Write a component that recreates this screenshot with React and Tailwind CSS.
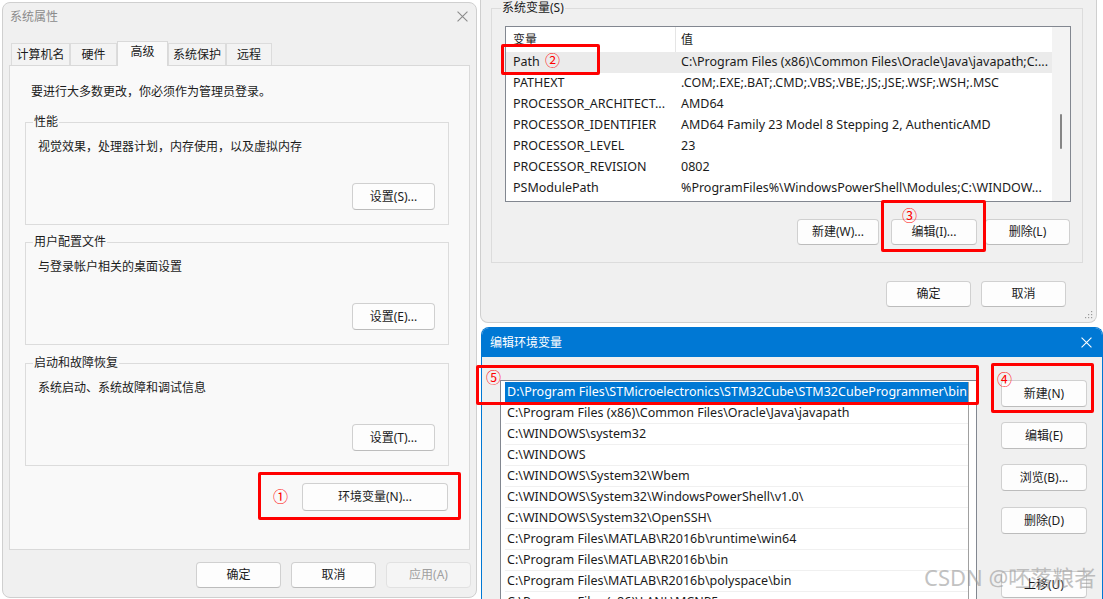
import React from 'react';

const FONT = "font-[family-name:'Noto_Sans','Noto_Sans_CJK_SC',sans-serif]";

function CloseIcon({ color = '#7a7a7a', size = 10 }) {
  return (
    <svg width={size} height={size} viewBox="0 0 10 10">
      <path d="M0.5 0.5 L9.5 9.5 M9.5 0.5 L0.5 9.5" stroke={color} strokeWidth="1" fill="none" />
    </svg>
  );
}

function Btn({ children, className = '', disabled }) {
  return (
    <div
      className={`flex items-center justify-center rounded-[4px] border text-[12px] leading-none ${
        disabled
          ? 'border-[#e1e1e1] bg-[#f5f5f5] text-[#a0a0a0]'
          : 'border-[#d0d0d0] border-b-[#bcbcbc] bg-[#fdfdfd] text-[#1b1b1b]'
      } ${className}`}
    >
      {children}
    </div>
  );
}

function Group({ label, text, button, className = '', textGap = 'mt-[9px]' }) {
  return (
    <fieldset className={`mx-[15px] w-[424px] border border-[#dcdcdc] ${className}`}>
      <legend className="ml-[7px] px-[1px] text-[12px] leading-[16px] text-[#1b1b1b]">{label}</legend>
      <div className={`${textGap} pl-[12px] text-[12px] leading-[16px] text-[#1b1b1b]`}>{text}</div>
      <div className="mt-[28px] flex justify-end pr-[13px] pb-[14px]">
        <Btn className="h-[27px] w-[83px]">{button}</Btn>
      </div>
    </fieldset>
  );
}

function SystemProperties() {
  const tabs = [
    { name: '计算机名', w: 'w-[59px]' },
    { name: '硬件', w: 'w-[47px]' },
    { name: '高级', w: 'w-[51px]', active: true },
    { name: '系统保护', w: 'w-[58px]' },
    { name: '远程', w: 'w-[46px]' },
  ];
  return (
    <div className="flex h-[596px] w-[475px] flex-col rounded-lg border border-[#cfcfcf] bg-[#f0f0f0]">
      <div className="flex h-[27px] items-center justify-between pl-[7px] pr-[8px]">
        <span className="text-[12px] text-[#8b8b8b]">系统属性</span>
        <CloseIcon color="#8b8b8b" size={11} />
      </div>
      <div className="mt-[11px] flex items-end pl-[8px]">
        {tabs.map((t) =>
          t.active ? (
            <div
              key={t.name}
              className={`relative z-10 -mb-px flex h-[25px] ${t.w} items-start justify-center border border-b-0 border-[#d9d9d9] bg-[#f9f9f9] pt-[1px] text-[12px] text-[#1b1b1b]`}
            >
              {t.name}
            </div>
          ) : (
            <div
              key={t.name}
              className={`flex h-[22px] ${t.w} items-center justify-center border border-b-0 border-[#dcdcdc] bg-[#f3f3f3] text-[12px] text-[#1b1b1b]`}
            >
              {t.name}
            </div>
          )
        )}
      </div>
      <div className="mx-[6px] h-[485px] border border-[#d9d9d9] bg-[#f9f9f9]">
        <div className="pl-[21px] pt-[18px] text-[12px] leading-[16px] text-[#1b1b1b]">
          要进行大多数更改，你必须作为管理员登录。
        </div>
        <Group className="mt-[14px]" label="性能" text="视觉效果，处理器计划，内存使用，以及虚拟内存" button="设置(S)..." />
        <Group className="mt-[9px]" label="用户配置文件" text="与登录帐户相关的桌面设置" button="设置(E)..." />
        <Group className="mt-[10px]" label="启动和故障恢复" text="系统启动、系统故障和调试信息" button="设置(T)..." />
        <div className="mt-[17px] flex justify-end pr-[21px]">
          <Btn className="h-[28px] w-[146px]">环境变量(N)...</Btn>
        </div>
      </div>
      <div className="mt-[12px] flex justify-end gap-[10px] pr-[5px]">
        <Btn className="h-[26px] w-[85px]">确定</Btn>
        <Btn className="h-[26px] w-[85px]">取消</Btn>
        <Btn className="h-[26px] w-[85px]" disabled>应用(A)</Btn>
      </div>
    </div>
  );
}

function EnvVariables() {
  const rows = [
    ['Path', 'C:\\Program Files (x86)\\Common Files\\Oracle\\Java\\javapath;C:...'],
    ['PATHEXT', '.COM;.EXE;.BAT;.CMD;.VBS;.VBE;.JS;.JSE;.WSF;.WSH;.MSC'],
    ['PROCESSOR_ARCHITECT...', 'AMD64'],
    ['PROCESSOR_IDENTIFIER', 'AMD64 Family 23 Model 8 Stepping 2, AuthenticAMD'],
    ['PROCESSOR_LEVEL', '23'],
    ['PROCESSOR_REVISION', '0802'],
    ['PSModulePath', '%ProgramFiles%\\WindowsPowerShell\\Modules;C:\\WINDOW...'],
  ];
  return (
    <div className="relative h-[323px] w-[617px] shrink-0 rounded-b-lg border-x border-b border-[#cfcfcf] bg-[#f0f0f0]">
      <fieldset className="ml-[10px] w-[592px] border border-[#dcdcdc]">
        <legend className="ml-[9px] px-[1px] text-[12px] leading-[16px] text-[#1b1b1b]">系统变量(S)</legend>
        <div className="ml-[13px] mt-[10px] flex h-[176px] w-[566px] border border-[#828790] bg-white">
          <div className="flex-1 overflow-hidden">
            <div className="flex h-[25px] items-center text-[12px] text-[#1b1b1b]">
              <div className="flex h-full w-[170px] items-center border-r border-[#e5e5e5] pl-[7px]">变量</div>
              <div className="pl-[5px]">值</div>
            </div>
            {rows.map(([k, v], i) => (
              <div
                key={k}
                className={`flex h-[21px] items-center text-[12.5px] text-[#1b1b1b] ${i === 0 ? 'bg-[#ebebeb]' : ''}`}
              >
                <div className="w-[170px] pl-[7px] whitespace-nowrap">{k}</div>
                <div className="pl-[5px] whitespace-nowrap">{v}</div>
              </div>
            ))}
          </div>
          <div className="relative w-[18px] shrink-0 bg-[#f3f3f3]">
            <div className="absolute left-[8px] top-[87px] h-[35px] w-[2px] rounded-full bg-[#858585]" />
          </div>
        </div>
        <div className="mt-[17px] flex justify-end pb-[17px] pr-[12px]">
          <Btn className="h-[26px] w-[82px]">新建(W)...</Btn>
          <Btn className="ml-[12px] h-[26px] w-[86px]">编辑(I)...</Btn>
          <Btn className="ml-[8px] h-[26px] w-[85px]">删除(L)</Btn>
        </div>
      </fieldset>
      <div className="mt-[18px] flex justify-end gap-[10px] pr-[30px]">
        <Btn className="h-[26px] w-[85px]">确定</Btn>
        <Btn className="h-[26px] w-[85px]">取消</Btn>
      </div>
      <svg className="absolute bottom-[3px] right-[3px]" width="8" height="8" viewBox="0 0 8 8">
        <g fill="#9a9a9a">
          <rect x="6" y="0" width="1.2" height="1.2" />
          <rect x="3" y="3" width="1.2" height="1.2" />
          <rect x="6" y="3" width="1.2" height="1.2" />
          <rect x="0" y="6" width="1.2" height="1.2" />
          <rect x="3" y="6" width="1.2" height="1.2" />
          <rect x="6" y="6" width="1.2" height="1.2" />
        </g>
      </svg>
    </div>
  );
}

function EditEnv() {
  const paths = [
    'D:\\Program Files\\STMicroelectronics\\STM32Cube\\STM32CubeProgrammer\\bin',
    'C:\\Program Files (x86)\\Common Files\\Oracle\\Java\\javapath',
    'C:\\WINDOWS\\system32',
    'C:\\WINDOWS',
    'C:\\WINDOWS\\System32\\Wbem',
    'C:\\WINDOWS\\System32\\WindowsPowerShell\\v1.0\\',
    'C:\\WINDOWS\\System32\\OpenSSH\\',
    'C:\\Program Files\\MATLAB\\R2016b\\runtime\\win64',
    'C:\\Program Files\\MATLAB\\R2016b\\bin',
    'C:\\Program Files\\MATLAB\\R2016b\\polyspace\\bin',
    'C:\\Program Files (x86)\\LANL\\MCNP5',
  ];
  return (
    <div className="ml-[1px] mt-[4px] flex h-[300px] w-[622px] shrink-0 flex-col overflow-hidden rounded-t-lg border-x border-t border-[#0078d4] bg-[#f0f0f0]">
      <div className="flex h-[29px] shrink-0 items-center justify-between bg-[#0078d4] pl-[8px] pr-[10px]">
        <span className="text-[12px] text-white">编辑环境变量</span>
        <CloseIcon color="#ffffff" size={11} />
      </div>
      <div className="flex">
        <div className="ml-[18px] mt-[23px] flex h-[260px] w-[477px] border border-[#828790] bg-white pt-[1px]">
          <div className="w-[467px] overflow-hidden">
            {paths.map((p, i) => (
              <div
                key={p}
                className={`ml-[4px] flex h-[21px] w-[463px] items-center whitespace-nowrap pl-[2px] text-[12.5px] ${
                  i === 0 ? 'bg-[#0078d4] text-white' : 'border-b border-[#f0f0f0] text-[#1b1b1b]'
                }`}
              >
                {p}
              </div>
            ))}
          </div>
          <div className="flex-1 border-l border-[#a0a0a0]" />
        </div>
        <div className="ml-[24px] mt-[23px] flex w-[86px] flex-col">
          <Btn className="h-[27px]">新建(N)</Btn>
          <Btn className="mt-[15px] h-[27px]">编辑(E)</Btn>
          <Btn className="mt-[15px] h-[27px]">浏览(B)...</Btn>
          <Btn className="mt-[16px] h-[27px]">删除(D)</Btn>
          <Btn className="mt-[37px] h-[27px]">上移(U)</Btn>
        </div>
      </div>
    </div>
  );
}

function Mark({ box, label, at }) {
  return (
    <>
      <div className={`pointer-events-none absolute rounded-[2px] border-[3px] border-[#ff0000] ${box}`} />
      <div className={`pointer-events-none absolute text-[15px] leading-none text-[#ff0000] ${at}`}>{label}</div>
    </>
  );
}

export default function App() {
  return (
    <div className={`relative flex h-[599px] w-[1103px] overflow-hidden bg-white ${FONT}`}>
      <div className="w-[480px] shrink-0 pl-[2px] pt-[2px]">
        <SystemProperties />
      </div>
      <div className="flex w-[623px] flex-col">
        <EnvVariables />
        <EditEnv />
      </div>

      <Mark box="left-[258px] top-[472px] h-[48px] w-[203px]" label="①" at="left-[273px] top-[489px]" />
      <Mark box="left-[501px] top-[44px] h-[31px] w-[99px]" label="②" at="left-[545px] top-[53px]" />
      <Mark box="left-[881px] top-[200px] h-[52px] w-[105px]" label="③" at="left-[902px] top-[208px]" />
      <Mark box="left-[991px] top-[363px] h-[50px] w-[103px]" label="④" at="left-[997px] top-[372px]" />
      <Mark box="left-[476px] top-[365px] h-[40px] w-[503px]" label="⑤" at="left-[486px] top-[370px]" />

      <div className="pointer-events-none absolute left-[924px] top-[566px] text-[22px] leading-none text-[#9a9a9a] opacity-60">
        CSDN @呸落粮者
      </div>
    </div>
  );
}
